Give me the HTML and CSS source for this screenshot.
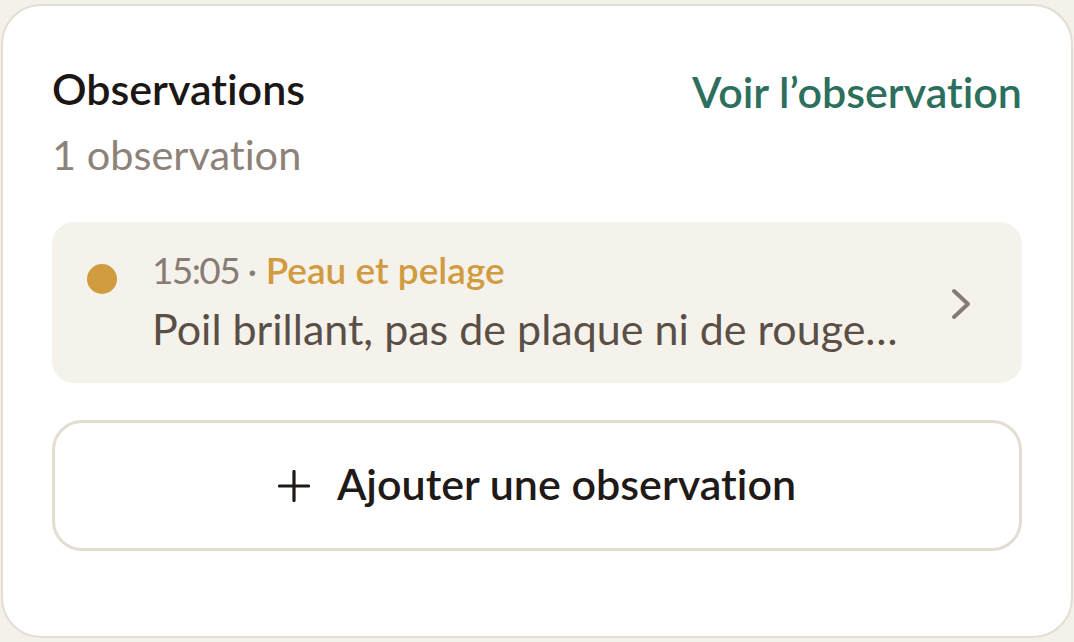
FILE: index.html
```html
<!DOCTYPE html>
<html lang="fr">
<head>
<meta charset="utf-8">
<link rel="stylesheet" href="styles.css">
</head>
<body>
<section class="card">
  <header class="card-head">
    <div class="head-text">
      <h2 class="title">Observations</h2>
      <p class="count">1 observation</p>
    </div>
    <a class="link" href="#">Voir l’observation</a>
  </header>
  <div class="item">
    <span class="dot"></span>
    <div class="item-body">
      <div class="meta"><span class="time">15:05</span> <span class="sep">·</span> <span class="cat">Peau et pelage</span></div>
      <div class="desc">Poil brillant, pas de plaque ni de rouge…</div>
    </div>
    <svg class="chev" width="20" height="32" viewBox="0 0 20 32"><path d="M3 3 L17 16 L3 29" fill="none" stroke="#867b72" stroke-width="4" stroke-linecap="round" stroke-linejoin="round"/></svg>
  </div>
  <button class="add">
    <svg class="plus" width="32" height="32" viewBox="0 0 32 32"><path d="M16 1.5 V30.5 M1.5 16 H30.5" stroke="#1f1a17" stroke-width="3.2" stroke-linecap="round"/></svg>
    <span class="add-label">Ajouter une observation</span>
  </button>
</section>
</body>
</html>
```

FILE: styles.css
```css
html, body {
  margin: 0;
  padding: 0;
}
* {
  font-variant-ligatures: none;
  font-feature-settings: "liga" 0, "clig" 0, "dlig" 0, "calt" 0;
}
body {
  background: #f4f1ea;
  font-family: "Lato", "Open Sans", sans-serif;
  width: 1074px;
  height: 642px;
  overflow: hidden;
}
.card {
  box-sizing: border-box;
  margin: 4px 1px 0 1px;
  height: 634px;
  background: #ffffff;
  border: 2px solid #e3ddd2;
  border-radius: 40px;
  padding: 57px 49px 0 49px;
}
.card-head {
  display: flex;
  justify-content: space-between;
  align-items: flex-start;
}
.title {
  margin: 0;
  font-size: 43px;
  font-weight: 600;
  line-height: 52px;
  color: #1c1714;
}
.count {
  margin: 14px 0 0 0;
  font-size: 41.5px;
  line-height: 50px;
  color: #8c8279;
}
.link {
  margin-top: 3px;
  font-size: 43px;
  line-height: 52px;
  font-weight: 600;
  color: #2d6f5d;
  text-decoration: none;
}
.item {
  margin-top: 43px;
  height: 161px;
  box-sizing: border-box;
  background: #f5f2ec;
  border-radius: 22px;
  display: flex;
  align-items: flex-start;
  padding: 0 51px 0 35px;
}
.dot {
  width: 30px;
  height: 30px;
  border-radius: 50%;
  background: #d19b3f;
  margin-top: 42px;
  flex: none;
}
.item-body {
  flex: 1;
  margin-left: 35px;
  padding-top: 25px;
}
.meta {
  font-size: 37px;
  line-height: 46px;
  color: #877c73;
}
.time {
  letter-spacing: -1.6px;
}
.sep {
  margin: 0 -1px;
}
.cat {
  color: #d19b3f;
  font-weight: 600;
}
.desc {
  margin-top: 10px;
  font-size: 43px;
  line-height: 52px;
  color: #5a4f46;
}
.chev {
  flex: none;
  align-self: center;
  margin-top: 2px;
}
.add {
  margin-top: 37px;
  width: 100%;
  height: 131px;
  box-sizing: border-box;
  background: #ffffff;
  border: 3px solid #e3ddd2;
  border-radius: 30px;
  display: flex;
  align-items: center;
  justify-content: center;
  gap: 27px;
  padding: 0 0 4px 0;
  font-family: inherit;
  font-size: 43px;
  font-weight: 600;
  color: #1f1a17;
  cursor: pointer;
}
.plus {
  flex: none;
  margin-top: 4px;
}
```
